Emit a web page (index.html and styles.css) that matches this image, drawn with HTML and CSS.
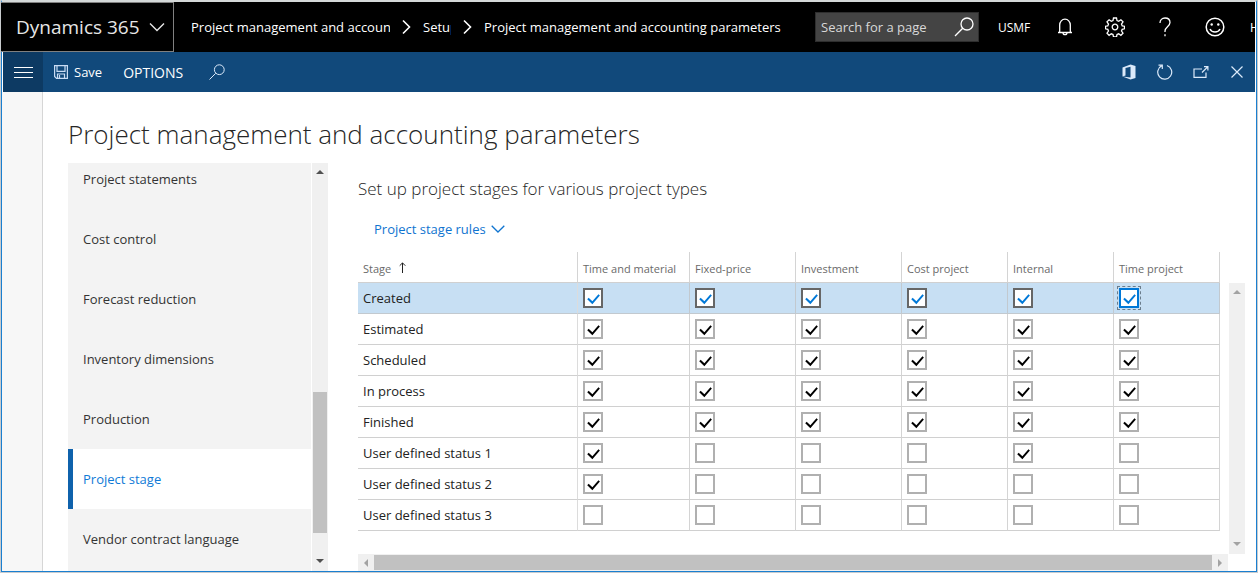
FILE: index.html
```html
<!DOCTYPE html>
<html lang="en">
<head>
<meta charset="utf-8">
<title>Project management and accounting parameters</title>
<link rel="stylesheet" href="styles.css">
</head>
<body>
<div class="window">
  <header class="topbar">
    <button class="brand" type="button">Dynamics 365
      <svg width="16" height="10" viewBox="0 0 16 10"><path d="M1 1.5l7 7 7-7" fill="none" stroke="currentColor" stroke-width="1.4"/></svg>
    </button>
    <nav class="crumbs" aria-label="Breadcrumb">
      <a class="crumb crumb-module" href="#">Project management and accounting</a>
      <svg width="9" height="16" viewBox="0 0 9 16"><path d="M1 1.5l6.5 6.5L1 14.500" fill="none" stroke="currentColor" stroke-width="1.6"/></svg>
      <a class="crumb crumb-group" href="#">Setup</a>
      <svg width="9" height="16" viewBox="0 0 9 16"><path d="M1 1.5l6.500 6.500L1 14.500" fill="none" stroke="currentColor" stroke-width="1.6"/></svg>
      <a class="crumb" href="#">Project management and accounting parameters</a>
    </nav>
    <div class="search">
      <input type="text" placeholder="Search for a page" aria-label="Search for a page">
      <svg width="20" height="20" viewBox="0 0 20 20" fill="none" stroke="currentColor" stroke-width="1.3"><circle cx="13" cy="7" r="6"/><path d="M8.700 11.300L1 19"/></svg>
    </div>
    <button class="company" type="button">USMF</button>
    <div class="tools">
      <button type="button" aria-label="Notifications"><svg width="16" height="18" viewBox="0 0 16 18" fill="none" stroke="currentColor" stroke-width="1.3"><path d="M1 14.500h14M2.700 14.500V7a5.300 5.800 0 0 1 10.600 0v7.500M6 14.800a2 1.900 0 0 0 4 0"/></svg></button>
      <button type="button" aria-label="Settings"><svg width="20" height="20" viewBox="-10 -10 20 20" fill="none" stroke="currentColor" stroke-width="1.3"><path d="M-1.500-9h3l.5 2.600 1.700.7 2.200-1.500 2.100 2.100-1.500 2.200.7 1.700 2.300.4v2.600l-2.300.5-.7 1.700 1.500 2.200-2.100 2.100-2.200-1.500-1.700.7-.5 2.500h-3l-.5-2.500-1.700-.7-2.200 1.500-2.100-2.100 1.500-2.200-.7-1.700-2.300-.5v-2.600l2.300-.4.7-1.700-1.500-2.200 2.100-2.100 2.200 1.500 1.700-.7z"/><circle r="2.800"/></svg></button>
      <button type="button" aria-label="Help"><svg width="12" height="20" viewBox="0 0 12 20" fill="none" stroke="currentColor" stroke-width="1.3"><path d="M1 6c0-3 2-5 5-5s5 1.900 5 4.500c0 4-5 4.500-5 8.500v1"/><path d="M6 17.300v2"/></svg></button>
      <button type="button" aria-label="Feedback"><svg width="20" height="20" viewBox="0 0 20 20" fill="none" stroke="currentColor" stroke-width="1.500"><circle cx="10" cy="10" r="8.800"/><path d="M5 12c1.700 4 8.300 4 10 0"/><circle cx="6.700" cy="7.500" r="1.200" fill="currentColor" stroke="none"/><circle cx="13.300" cy="7.500" r="1.200" fill="currentColor" stroke="none"/></svg></button>
    </div>
    <span class="user">H</span>
  </header>

  <div class="actionbar">
    <button class="menu" type="button" aria-label="Menu"><svg width="19" height="12" viewBox="0 0 19 12"><path d="M0 1.500h19M0 6.500h19M0 11.500h19" stroke="currentColor"/></svg></button>
    <button class="save" type="button"><svg width="14" height="14" viewBox="0 0 14 14" fill="none" stroke="#c9dcf4" stroke-width="1.200"><path d="M.6.600h12.800v12.800H2.500L.6 11.500zM3 1v5.300h8V1M3.500 13.400V9h7v4.400M5.500 10v3.400"/></svg>Save</button>
    <button class="options" type="button">OPTIONS</button>
    <button class="find" type="button" aria-label="Search actions"><svg width="16" height="16" viewBox="0 0 16 16" fill="none" stroke="#dceafa"><circle cx="10.300" cy="5.700" r="4.900"/><path d="M6.700 9.300L.5 15.500"/></svg></button>
    <div class="page-tools">
      <button type="button" aria-label="Open in Office"><svg width="14" height="16" viewBox="0 0 14 16"><path d="M.5 3.500L8.500.500l5 1.500v12l-5 1.500-8-3 8 1V2.800L3.500 4v7.500l-3 1z" fill="currentColor"/></svg></button>
      <button type="button" aria-label="Refresh"><svg width="16" height="16" viewBox="0 0 16 16" fill="none" stroke="currentColor" stroke-width="1.200"><path d="M10 1.500a7 7 0 1 1-5.500.4M1.500 1.200h3.800v3.800"/></svg></button>
      <button type="button" aria-label="Open in new window"><svg width="16" height="12" viewBox="0 0 16 12" fill="none" stroke="currentColor" stroke-width="1.200"><path d="M9 3H1v8.300h12V6.500M9 6.500L14.500 1M11 .7h3.900v3.800"/></svg></button>
      <button type="button" aria-label="Close"><svg width="12" height="12" viewBox="0 0 12 12"><path d="M.5.500l11 11M11.500.500l-11 11" stroke="currentColor" stroke-width="1.200"/></svg></button>
    </div>
  </div>

  <div class="body">
    <div class="rail"></div>
    <main class="page">
      <h1>Project management and accounting parameters</h1>
      <div class="columns">
        <div class="side">
          <nav class="tabs" aria-label="Parameter groups">
            <a href="#">Project statements</a>
            <a href="#">Cost control</a>
            <a href="#">Forecast reduction</a>
            <a href="#">Inventory dimensions</a>
            <a href="#">Production</a>
            <a class="current" href="#" aria-current="page">Project stage</a>
            <a href="#">Vendor contract language</a>
          </nav>
          <div class="vbar dark">
            <svg width="8" height="4" viewBox="0 0 8 4"><path d="M0 4l4-4 4 4z" fill="currentColor"/></svg>
            <div class="vtrack"><div class="vthumb"></div></div>
            <svg width="8" height="4" viewBox="0 0 8 4"><path d="M0 0l4 4 4-4z" fill="currentColor"/></svg>
          </div>
        </div>

        <section class="panel">
          <h2>Set up project stages for various project types</h2>
          <button class="rules" type="button">Project stage rules
            <svg width="14" height="8" viewBox="0 0 14 8"><path d="M.7.700L7 7l6.300-6.300" fill="none" stroke="currentColor" stroke-width="1.300"/></svg>
          </button>
          <div class="gridwrap">
            <table class="grid">
              <thead>
                <tr>
                  <th scope="col">Stage <svg class="sort" width="7" height="11" viewBox="0 0 7 11"><path d="M3.500 11V1M.7 3.700L3.500.900l2.800 2.800" fill="none" stroke="currentColor"/></svg></th>
                  <th class="wide" scope="col">Time and material</th>
                  <th class="type" scope="col">Fixed-price</th>
                  <th class="type" scope="col">Investment</th>
                  <th class="type" scope="col">Cost project</th>
                  <th class="type" scope="col">Internal</th>
                  <th class="type" scope="col">Time project</th>
                </tr>
              </thead>
              <tbody id="stages"></tbody>
            </table>
            <div class="vbar light">
              <svg width="8" height="4" viewBox="0 0 8 4"><path d="M0 4l4-4 4 4z" fill="currentColor"/></svg>
              <svg width="8" height="4" viewBox="0 0 8 4"><path d="M0 0l4 4 4-4z" fill="currentColor"/></svg>
            </div>
          </div>
          <div class="hbar">
            <svg width="4" height="8" viewBox="0 0 4 8"><path d="M4 0L0 4l4 4z" fill="currentColor"/></svg>
            <div class="hthumb"></div>
            <svg width="4" height="8" viewBox="0 0 4 8"><path d="M0 0l4 4-4 4z" fill="currentColor"/></svg>
          </div>
        </section>
      </div>
    </main>
  </div>
</div>
<script src="script.js"></script>
</body>
</html>
```
FILE: styles.css
```css
* { box-sizing: border-box; }

body {
  margin: 0;
  height: 100vh;
  padding: 0 1px 1px;
  background: #c8cbce;
  font-family: "Segoe UI", "Open Sans", "Noto Sans", sans-serif;
  font-size: 13px;
  color: #333;
  overflow: hidden;
}

button {
  font: inherit;
  color: inherit;
  background: none;
  border: 0;
  padding: 0;
  display: flex;
  align-items: center;
}

a { color: inherit; text-decoration: none; }
svg { flex: none; display: block; }

.window {
  height: 100%;
  display: flex;
  flex-direction: column;
  background: #fff;
  border: 1px solid #1a7fd0;
  border-top: 2px solid #d4d8d8;
}

/* Top bar */
.topbar {
  flex: none;
  height: 50px;
  margin-left: -1px;
  margin-right: 1px;
  display: flex;
  align-items: center;
  background: #000;
  color: #fff;
  overflow: hidden;
}

.brand {
  flex: none;
  width: 173px;
  height: 50px;
  padding-left: 15px;
  gap: 9px;
  border: 1px solid #808080;
  border-left: 0;
  font-size: 19px;
  color: #e6e6e6;
}

.crumbs {
  flex: 1;
  min-width: 0;
  padding-left: 17px;
  display: flex;
  align-items: center;
  gap: 12px;
  white-space: nowrap;
}

.crumb-module { width: 199px; overflow: hidden; }
.crumb-group { width: 28px; overflow: hidden; }

.search {
  flex: none;
  width: 164px;
  height: 30px;
  padding: 0 4px 0 5px;
  display: flex;
  align-items: center;
  background: #444;
  border: 1px solid #2e2e2e;
}

.search input {
  flex: 1;
  min-width: 0;
  padding: 0;
  border: 0;
  outline: 0;
  background: none;
  font: inherit;
  color: #fff;
}

.search input::placeholder { color: #d8d8d8; opacity: 1; }

.company {
  flex: none;
  width: 61px;
  padding-left: 19px;
  font-size: 12px;
}

.tools { display: flex; }
.tools button { width: 50px; height: 50px; justify-content: center; }
.user { width: 15px; padding-left: 10px; overflow: hidden; font-size: 12px; }

/* Action bar */
.actionbar {
  flex: none;
  height: 40px;
  margin: 0 1px;
  display: flex;
  align-items: center;
  background: #11497b;
  color: #fff;
  font-size: 14px;
}

.menu { width: 40px; height: 40px; justify-content: center; background: #0d3a63; }
.save { margin-left: 11px; gap: 6px; font-size: 13px; }
.options { margin-left: 21px; }
.find { margin-left: 26px; }
.page-tools { margin-left: auto; display: flex; color: #dceafa; }
.page-tools button { width: 36px; height: 40px; justify-content: center; }

/* Page body */
.body { flex: 1; min-height: 0; display: flex; }
.rail { flex: none; width: 41px; background: #f7f7f7; border-right: 1px solid #d6d6d6; }

.page {
  flex: 1;
  min-width: 0;
  padding: 23px 11px 0 25px;
  display: flex;
  flex-direction: column;
}

h1 {
  margin: 0 0 10px;
  font-size: 26px;
  line-height: 38px;
  font-weight: 300;
  color: #262626;
}

.columns { flex: 1; min-height: 0; display: flex; gap: 30px; }

/* Vertical tabs */
.side { flex: none; width: 260px; display: flex; background: #f3f3f3; }

.tabs {
  flex: 1;
  min-width: 0;
  padding-bottom: 2px;
  display: flex;
  flex-direction: column;
  justify-content: flex-end;
  overflow: hidden;
  border-right: 1px solid #fff;
}

.tabs a {
  flex: none;
  height: 60px;
  padding-left: 10px;
  border-left: 5px solid transparent;
  display: flex;
  align-items: center;
}

.tabs .current { background: #fff; border-left-color: #0f62ac; color: #0f7ad6; }

.vbar {
  flex: none;
  width: 16px;
  padding: 7px 0 8px;
  display: flex;
  flex-direction: column;
  align-items: center;
  justify-content: space-between;
  background: #f0f0f0;
}

.dark { color: #505050; }
.light { color: #a3a3a3; margin-top: 31px; }
.vtrack { flex: 1; padding: 6px 0 26px; display: flex; flex-direction: column; justify-content: flex-end; }
.vthumb { width: 14px; height: 40%; background: #c1c1c1; }

/* Stage panel */
.panel { flex: 1; min-width: 0; display: flex; flex-direction: column; }

h2 { margin: 13px 0 14px; font-size: 17px; line-height: 26px; font-weight: 300; color: #262626; }

.rules {
  align-self: flex-start;
  height: 26px;
  margin: 0 0 10px 16px;
  gap: 5px;
  color: #0f74d0;
}

.gridwrap { flex: 1; min-height: 0; display: flex; gap: 9px; align-items: stretch; }

.grid {
  flex: 1;
  align-self: flex-start;
  width: 100%;
  table-layout: fixed;
  border-collapse: separate;
  border-spacing: 0;
  color: #222;
}

.grid th, .grid td {
  padding: 0 0 0 5px;
  border-right: 1px solid #d4d4d4;
  border-bottom: 1px solid #d0d0d0;
  text-align: left;
  vertical-align: middle;
  white-space: nowrap;
}

.grid thead th { height: 31px; padding-top: 3px; font-size: 11px; font-weight: 400; color: #6a6a6a; }
.grid tbody th, .grid td { height: 31px; font-weight: 400; }
.grid tbody th { border-right-color: #dcdcdc; }
.wide { width: 112px; }
.type { width: 106px; }
.sort { display: inline-block; margin-left: 5px; color: #222; }
.selected th, .selected td { background: #c7dff3; border-color: #c2c9cf; }

.check {
  appearance: none;
  display: grid;
  width: 20px;
  height: 20px;
  margin: 0;
  border: 2px solid #b0b0b0;
  background: #fff;
  color: #000;
}

.check:checked::before {
  content: "";
  width: 16px;
  height: 16px;
  background: currentColor;
  clip-path: polygon(14% 58%, 23% 49%, 46% 71%, 84% 27%, 93% 35%, 46% 89%);
}

.selected .check { border-color: #666; color: #0078d7; }
.selected .focused { border-color: #0078d7; outline: 1px dashed #6b7d8c; outline-offset: 1px; }

.hbar {
  flex: none;
  height: 17px;
  margin-right: 17px;
  padding: 0 6px;
  display: flex;
  align-items: center;
  gap: 6px;
  background: #f0f0f0;
  color: #a3a3a3;
}

.hthumb { flex: 1; height: 15px; background: #c1c1c1; }
```
FILE: script.js
```js
const types = ["Time and material", "Fixed-price", "Investment", "Cost project", "Internal", "Time project"];
const stages = [
  ["Created", "111111"],
  ["Estimated", "111111"],
  ["Scheduled", "111111"],
  ["In process", "111111"],
  ["Finished", "111111"],
  ["User defined status 1", "100010"],
  ["User defined status 2", "100000"],
  ["User defined status 3", "000000"]
];

const body = document.getElementById("stages");
stages.forEach(([name, flags], rowIndex) => {
  const row = body.insertRow();
  if (rowIndex === 0) row.className = "selected";
  const head = document.createElement("th");
  head.scope = "row";
  head.textContent = name;
  row.append(head);
  types.forEach((type, i) => {
    const box = document.createElement("input");
    box.type = "checkbox";
    box.className = rowIndex === 0 && i === 5 ? "check focused" : "check";
    box.checked = flags[i] === "1";
    box.setAttribute("aria-label", name + ", " + type);
    row.insertCell().append(box);
  });
});
```
